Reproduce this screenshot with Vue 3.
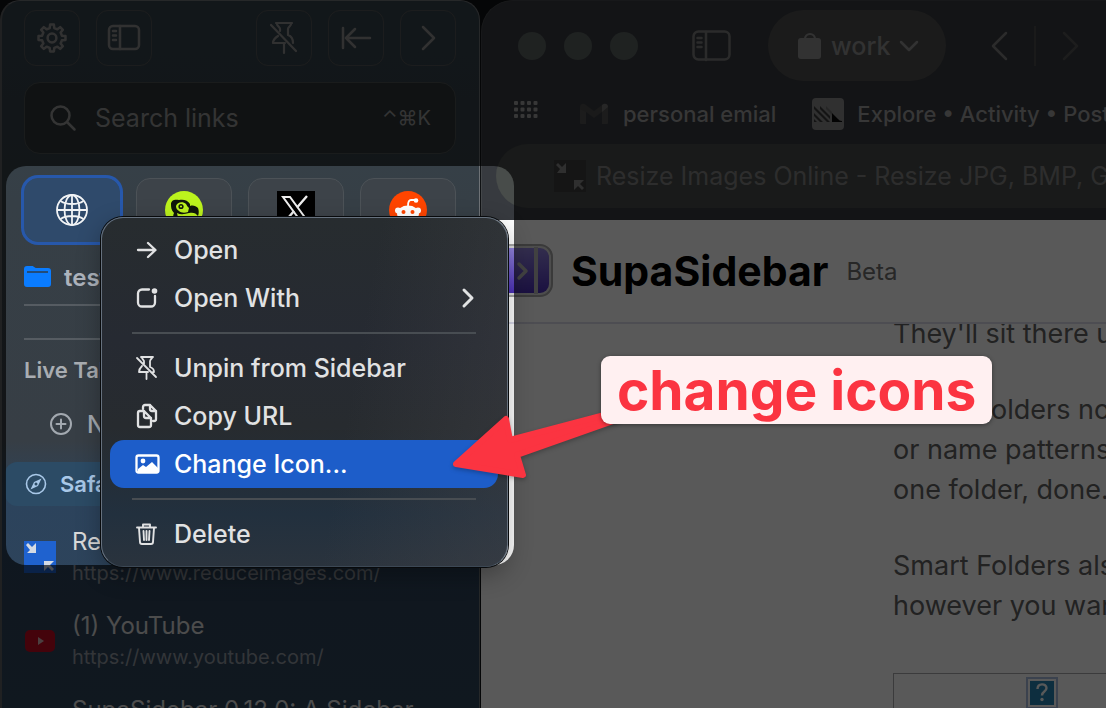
<script setup>
const gearPoints = Array.from({ length: 32 }, (_, i) => {
  const tooth = Math.floor(i / 4)
  const step = i % 4
  const base = tooth * 45 - 90
  const offset = [-13, -8, 8, 13][step]
  const radius = step === 1 || step === 2 ? 13.6 : 10.2
  const angle = ((base + offset) * Math.PI) / 180
  return `${(15 + radius * Math.cos(angle)).toFixed(2)},${(15 + radius * Math.sin(angle)).toFixed(2)}`
}).join(' ')

const tabs = [
  { icon: 'resize', title: 'Resize Images', url: 'https://www.reduceimages.com/' },
  { icon: 'youtube', title: '(1) YouTube', url: 'https://www.youtube.com/' },
  { icon: '', title: 'SupaSidebar 0.12.0: A Sidebar', url: '' },
]

const menuGroups = [
  [
    { id: 'open', label: 'Open' },
    { id: 'with', label: 'Open With', more: true },
  ],
  [
    { id: 'unpin', label: 'Unpin from Sidebar' },
    { id: 'copy', label: 'Copy URL' },
    { id: 'image', label: 'Change Icon...', active: true },
  ],
  [{ id: 'trash', label: 'Delete' }],
]
</script>

<template>
  <div class="desktop">
    <aside class="sidebar">
      <div class="tools">
        <button class="tool" aria-label="Settings">
          <svg width="30" height="30" viewBox="0 0 30 30" class="line">
            <polygon :points="gearPoints" />
            <circle cx="15" cy="15" r="4.4" />
          </svg>
        </button>
        <button class="tool" aria-label="Toggle sidebar">
          <svg width="34" height="28" viewBox="0 0 34 28" class="line">
            <rect x="2" y="2" width="30" height="23" rx="4" />
            <path d="M13 2v23M6 7h3M6 11.500h3M6 16h3" />
          </svg>
        </button>
        <span class="spacer"></span>
        <button class="tool" aria-label="Unpin window">
          <svg width="32" height="34" viewBox="0 0 32 34" class="line thin">
            <path d="M8 2h16M9 3c0 2 3 3 3 5v2M23 3c0 2-3 3-3 5v6c3 1 5 4 5 8M10 15c-3 2-5 4-5 7h12M16 22v10M3 4l25 26" />
          </svg>
        </button>
        <button class="tool" aria-label="Dock left">
          <svg width="32" height="24" viewBox="0 0 32 24" class="line">
            <path d="M3 2v20M30 12H6M15 3l-9 9 9 9" />
          </svg>
        </button>
        <button class="tool" aria-label="Next">
          <svg width="20" height="28" viewBox="0 0 20 28" class="line">
            <path d="M5 3l11 11L5 25" />
          </svg>
        </button>
      </div>

      <label class="search">
        <svg width="28" height="28" viewBox="0 0 28 28" class="line">
          <circle cx="11.500" cy="11.500" r="9" />
          <path d="M18.500 18.500l7 7" />
        </svg>
        <input type="text" placeholder="Search links" aria-label="Search links" />
        <kbd>⌃⌘K</kbd>
      </label>

      <div class="tiles">
        <button class="tile selected" aria-label="Website">
          <svg width="34" height="34" viewBox="0 0 34 34" class="globe">
            <circle cx="17" cy="17" r="15" />
            <ellipse cx="17" cy="17" rx="7.500" ry="15" />
            <path d="M17 2v30M2 17h30M5.500 8c6 4 17 4 23 0M5.500 26c6-4 17-4 23 0" />
          </svg>
        </button>
        <button class="tile" aria-label="Dodo">
          <svg width="38" height="38" viewBox="0 0 38 38">
            <circle cx="19" cy="19" r="19" fill="#bcf31d" />
            <path d="M6 13c0-4 4-5 8-4 4-1 9 0 11 4l0 2c3-1 6 0 8 2 1 3 1 5 0 8-2-3-5-4-9-3-4 1-8 2-12 0l2 9C9 30 7 26 9 22c-3-3-3-6-3-9z" fill="#10160b" />
            <path d="M11 15c1-4 7-5 10-2 1 2 2 3 3 4l-1 4c-3 1-7 1-9-1-2-1-3-3-3-5z" fill="#bcf31d" />
            <circle cx="16" cy="15.500" r="2.600" fill="#10160b" />
            <circle cx="16" cy="15.500" r="1.100" fill="#bcf31d" />
          </svg>
        </button>
        <button class="tile" aria-label="X">
          <svg width="38" height="38" viewBox="0 0 38 38">
            <rect width="38" height="38" fill="#000" />
            <path d="M6 6h7l19 26h-7z" fill="none" stroke="#eee" stroke-width="2" />
            <path d="M30 5L20 16.500M17 20L6 33" stroke="#eee" stroke-width="2.400" />
          </svg>
        </button>
        <button class="tile" aria-label="Reddit">
          <svg width="38" height="38" viewBox="0 0 38 38">
            <circle cx="19" cy="19" r="19" fill="#ff4500" />
            <path d="M19 15c0-4 1-6 3-6h4" fill="none" stroke="#fff" stroke-width="1.800" />
            <circle cx="27" cy="9.500" r="2.300" fill="#fff" />
            <circle cx="9" cy="19.500" r="3" fill="#fff" />
            <circle cx="29" cy="19.500" r="3" fill="#fff" />
            <ellipse cx="19" cy="23" rx="11" ry="8.500" fill="#fff" />
            <circle cx="14.500" cy="21" r="2" fill="#ff4500" />
            <circle cx="23.500" cy="21" r="2" fill="#ff4500" />
            <path d="M14 26c3 3 7 3 10 0" fill="none" stroke="#333" stroke-width="1.500" />
          </svg>
        </button>
      </div>

      <div class="folder">
        <svg width="28" height="24" viewBox="0 0 28 24">
          <path d="M0 4a3 3 0 0 1 3-3h5c2 0 2 2 5 2h11a3 3 0 0 1 3 3v13a3 3 0 0 1-3 3H3a3 3 0 0 1-3-3z" fill="#0a7cff" />
          <path d="M3 7h21" stroke="#2c3c4c" stroke-width="1.500" />
        </svg>
        <span>test</span>
      </div>
      <hr class="rule" />
      <hr class="rule second" />
      <h2 class="live">Live Tabs</h2>
      <button class="newtab">
        <svg width="24" height="24" viewBox="0 0 24 24" class="line small">
          <circle cx="12" cy="12" r="10" />
          <path d="M12 7.500v9M7.500 12h9" />
        </svg>
        New Tab
      </button>
      <div class="safari">
        <svg width="22" height="22" viewBox="0 0 22 22">
          <circle cx="11" cy="11" r="9.500" fill="none" stroke="currentColor" stroke-width="1.600" />
          <path d="M16.500 5.500l-3.500 7.500-7.500 3.500 3.500-7.500z" fill="currentColor" />
          <circle cx="11" cy="11" r="1.500" fill="#2c4b65" />
        </svg>
        Safari
      </div>
      <a v-for="tab in tabs" :key="tab.title" class="tab" href="#">
        <span class="favicon">
          <svg v-if="tab.icon === 'resize'" width="32" height="32" viewBox="0 0 32 32">
            <rect width="32" height="32" fill="#1f62cf" />
            <path d="M2 4l2-2 4 4 4-4v10H3l3-3zM20 20h10l-4 4 4 4-2 2-4-4-4 4z" fill="#d5dbe4" />
          </svg>
          <svg v-else-if="tab.icon === 'youtube'" width="32" height="24" viewBox="0 0 32 24">
            <rect x="1" y="1" width="30" height="22" rx="5" fill="#c20b21" />
            <path d="M14 8l6 4-6 4z" fill="#d8b4b8" />
          </svg>
        </span>
        <span class="lines">
          <span class="title">{{ tab.title }}</span>
          <span class="url">{{ tab.url }}</span>
        </span>
      </a>
    </aside>

    <main class="browser">
      <header class="chrome">
        <div class="bar">
          <span class="lights"><i></i><i></i><i></i></span>
          <button class="plain" aria-label="Show sidebar">
            <svg width="40" height="32" viewBox="0 0 40 32" class="line">
              <rect x="1.500" y="1.500" width="36" height="28" rx="5" />
              <path d="M14 2v28M5.500 8h4M5.500 12.500h4M5.500 17h4" />
            </svg>
          </button>
          <button class="profile">
            <svg width="24" height="28" viewBox="0 0 24 28">
              <rect x="0" y="6" width="23" height="21" rx="3" fill="currentColor" />
              <path d="M7 7a5 5 0 0 1 10 0" fill="none" stroke="currentColor" stroke-width="2.200" />
            </svg>
            <span>work</span>
            <svg width="20" height="14" viewBox="0 0 20 14" class="line">
              <path d="M2 3l8 8 8-8" />
            </svg>
          </button>
          <button class="plain nav" aria-label="Back">
            <svg width="18" height="30" viewBox="0 0 18 30" class="line"><path d="M16 2L3 15l13 13" /></svg>
          </button>
          <span class="divider"></span>
          <button class="plain nav faint" aria-label="Forward">
            <svg width="18" height="30" viewBox="0 0 18 30" class="line"><path d="M2 2l13 13L2 28" /></svg>
          </button>
        </div>

        <nav class="bookmarks">
          <svg class="grid" width="24" height="18" viewBox="0 0 24 18" fill="currentColor">
            <g v-for="row in 3" :key="row">
              <rect v-for="col in 4" :key="col" :x="col * 6.5 - 6.5" :y="row * 6.5 - 6.5" width="4" height="4" rx="1" />
            </g>
          </svg>
          <a class="mail" href="#">
            <svg width="28" height="22" viewBox="0 0 28 22">
              <path d="M0 3v17a1 1 0 0 0 1 1h5V8z" fill="#505050" />
              <path d="M28 3v17a1 1 0 0 1-1 1h-5V8z" fill="#505050" />
              <path d="M0 4c0-4 4-4 6-2l8 6 8-6v7l-8 6-8-6-6-3z" fill="#4a4a4a" />
              <path d="M22 2c2-2 6-2 6 2l-6 5z" fill="#707070" />
            </svg>
            personal emial
          </a>
          <a class="explore" href="#">
            <svg width="32" height="32" viewBox="0 0 32 32">
              <rect width="32" height="32" rx="4" fill="#8a8a8a" />
              <path d="M2 8v3l13 13h3zM2 15v3l6 6h3zM2 21v3h3zM8 8v3l10 10v-3z" fill="#3a3a3a" />
              <path d="M14 8v3l6 6v-3z" fill="#6e6e6e" />
              <path d="M20 15v9h10v-1c-2 0-3-1-4-2z" fill="#0b0b0b" />
            </svg>
            Explore • Activity • Posthog
          </a>
        </nav>

        <button class="address">
          <svg width="32" height="32" viewBox="0 0 32 32">
            <rect width="32" height="32" fill="#3c3c3c" />
            <path d="M2 5l2-2 4 4 4-4v10H3l3-4zM20 20h10l-4 4 4 4-2 2-4-4-4 4z" fill="#888" />
          </svg>
          <span>Resize Images Online - Resize JPG, BMP, GIF</span>
        </button>
      </header>

      <section class="page">
        <header class="site">
          <svg width="100" height="54" viewBox="0 0 100 54">
            <rect x="1" y="1" width="97" height="51" rx="12" fill="#ddd" stroke="#a5a5a5" stroke-width="2" />
            <rect x="4" y="4" width="91" height="45" rx="9" fill="url(#violet)" />
            <rect x="80" y="3" width="4" height="47" fill="#bbb" />
            <path d="M65 20l7 7-7 7" fill="none" stroke="#b9b9b9" stroke-width="3.500" stroke-linecap="round" stroke-linejoin="round" />
            <defs>
              <linearGradient id="violet" x1="0" y1="0" x2="0" y2="1">
                <stop offset="0" stop-color="#9183dd" />
                <stop offset="1" stop-color="#4c30b8" />
              </linearGradient>
            </defs>
          </svg>
          <h1>SupaSidebar</h1>
          <span class="beta">Beta</span>
        </header>
        <article class="article">
          <p>They'll sit there until</p>
          <p>Smart Folders now<br />or name patterns,<br />one folder, done.</p>
          <p>Smart Folders also<br />however you want.</p>
          <div class="figure">
            <svg width="32" height="32" viewBox="0 0 32 32">
              <rect width="32" height="32" fill="#a9bcdf" />
              <rect x="2" y="2" width="28" height="28" fill="#fff" />
              <rect x="4" y="4" width="24" height="24" fill="#2585b5" />
              <path d="M11.500 12c0-6 9-6 9-1 0 4-4.500 3-4.500 7.500" fill="none" stroke="#fff" stroke-width="2.400" />
              <circle cx="16" cy="22.500" r="1.700" fill="#fff" />
            </svg>
          </div>
        </article>
      </section>
    </main>

    <div class="spotlight"></div>

    <div class="menu" role="menu">
      <div v-for="(group, g) in menuGroups" :key="g" class="group">
        <button v-for="item in group" :key="item.id" role="menuitem" class="item" :class="{ active: item.active }">
          <svg width="28" height="28" viewBox="0 0 28 28" class="line menuicon">
            <path v-if="item.id === 'open'" d="M5 14h17M15 7l7.500 7-7.500 7" />
            <g v-else-if="item.id === 'with'">
              <path d="M16 5.500H9a4 4 0 0 0-4 4v9a4 4 0 0 0 4 4h9a4 4 0 0 0 4-4V12" />
              <circle cx="21.500" cy="7" r="2.800" fill="currentColor" stroke="none" />
            </g>
            <path v-else-if="item.id === 'unpin'" stroke-width="1.800" d="M8 3h12M9 4l2 3M19 4c-1 1-2 2-2 3v6c3 1 4 3 4 5h-1M9 12c-2 2-3 3-3 6h9M13.500 18v7M4 4l19 19M11 7v3" />
            <g v-else-if="item.id === 'copy'">
              <path d="M5 11a2 2 0 0 1 2-2h4l7 7v7a2 2 0 0 1-2 2H7a2 2 0 0 1-2-2zM11 9v5a2 2 0 0 0 2 2h5" />
              <path d="M10 7V5a2 2 0 0 1 2-2h5l6 6v8a2 2 0 0 1-2 2h-1M17 3v4a2 2 0 0 0 2 2h4" />
            </g>
            <g v-else-if="item.id === 'image'">
              <rect x="3.500" y="5.500" width="22" height="17" rx="2" />
              <circle cx="10" cy="11" r="2.400" fill="currentColor" stroke="none" />
              <path d="M5 19l5-4 3 2 6-5 6 6v4H5z" fill="currentColor" stroke="none" />
            </g>
            <path v-else d="M4 7.500h19M10 7V4.500h7V7M6 8l1 14a2 2 0 0 0 2 2h9a2 2 0 0 0 2-2l1-14M10.500 11l.5 9M13.500 11v9M16.500 11l-.5 9" stroke-width="1.900" />
          </svg>
          <span>{{ item.label }}</span>
          <svg v-if="item.more" width="14" height="22" viewBox="0 0 14 22" class="line more">
            <path d="M3 3l8 8-8 8" />
          </svg>
        </button>
      </div>
    </div>

    <svg class="arrow" width="180" height="90" viewBox="0 0 180 90">
      <path d="M6 58L56 13l4 21L166 6v8L67 49l6 20z" fill="#fb3441" stroke="#fb3441" stroke-width="6" stroke-linejoin="round" />
    </svg>
    <div class="callout">change icons</div>
  </div>
</template>

<style>
body {
  background: #101214;
}
</style>

<style scoped>
.desktop {
  position: relative;
  display: flex;
  height: 100vh;
  overflow: hidden;
  background: #101214;
  font-family: Inter, "Liberation Sans", sans-serif;
}
* {
  box-sizing: border-box;
}
button,
input {
  font: inherit;
  color: inherit;
  background: none;
  border: 0;
  padding: 0;
  margin: 0;
}
a {
  color: inherit;
  text-decoration: none;
}
svg {
  display: block;
  flex: none;
}
.line {
  fill: none;
  stroke: currentColor;
  stroke-width: 2.5;
  stroke-linecap: round;
  stroke-linejoin: round;
}
.thin {
  stroke-width: 2.2;
}
.small {
  stroke-width: 2;
}
.sidebar {
  flex: 0 0 480px;
  height: 100%;
  overflow: hidden;
  padding: 9px 23px 0 22px;
  border: 1px solid #6e7276;
  border-left: 2px solid #5d6063;
  border-bottom: 0;
  border-radius: 20px 20px 0 0;
  background: linear-gradient(#36434c 0, #363f46 200px, #373e45 440px, #2c435c 500px, #30455a 100%);
}
.tools {
  display: flex;
  gap: 16px;
  color: #8e8e8e;
}
.tool {
  display: grid;
  place-items: center;
  width: 56px;
  height: 56px;
  border: 1px solid #525556;
  border-radius: 12px;
}
.spacer {
  flex: 1;
}
.search {
  display: flex;
  align-items: center;
  height: 72px;
  margin-top: 16px;
  padding: 0 24px;
  border: 1px solid #4c5051;
  border-radius: 16px;
  background: #2e3638;
  color: #959595;
}
.search input {
  flex: 1;
  min-width: 0;
  margin-left: 18px;
  outline: 0;
  font-size: 25px;
}
.search input::placeholder {
  color: #959595;
  opacity: 1;
}
kbd {
  font: 20px Inter, "DejaVu Sans", sans-serif;
}
.tiles {
  display: flex;
  gap: 16px;
  margin-top: 24px;
}
.tile {
  display: grid;
  place-items: center;
  flex: 1;
  height: 64px;
  border: 1px solid #4c5257;
  border-radius: 14px;
  background: #3d4349;
}
.selected {
  border-color: #2f4a6b;
  background: #2f4a6b;
  box-shadow: 0 0 0 3px #2758ab;
}
.globe {
  fill: none;
  stroke: #f1f3f5;
  stroke-width: 1.8;
}
.folder {
  display: flex;
  align-items: center;
  gap: 12px;
  height: 44px;
  margin-top: 13px;
  font-size: 24px;
  font-weight: 600;
  color: #adb3bc;
}
.rule {
  height: 2px;
  margin: 5px 0 0;
  border: 0;
  background: #565c62;
}
.second {
  margin-top: 32px;
}
.live {
  margin: 16px 0 0;
  font-size: 22px;
  line-height: 28px;
  font-weight: 600;
  color: #a9adb2;
}
.newtab {
  display: flex;
  align-items: center;
  gap: 14px;
  height: 40px;
  margin: 20px 0 0 25px;
  font-size: 24px;
  font-weight: 500;
  color: #a3a9b0;
}
.safari {
  display: flex;
  align-items: center;
  gap: 13px;
  height: 44px;
  margin: 18px -19px 9px;
  padding-left: 20px;
  border-radius: 12px;
  background: #2c4b65;
  font-size: 22px;
  font-weight: 600;
  color: #a9c8e8;
}
.tab {
  display: flex;
  align-items: center;
  gap: 16px;
  height: 84px;
}
.favicon {
  width: 32px;
}
.lines {
  display: flex;
  flex-direction: column;
  white-space: nowrap;
}
.title {
  font-size: 24px;
  line-height: 32px;
  color: #d9d9d9;
}
.url {
  height: 30px;
  font-size: 20px;
  line-height: 30px;
  color: #9299a2;
}
.browser {
  flex: 1;
  min-width: 0;
  display: flex;
  flex-direction: column;
  margin-left: 1px;
  border-radius: 32px 0 0 0;
  overflow: hidden;
  background: #373a3f;
}
.chrome {
  height: 220px;
  overflow: hidden;
  padding: 9px 0 0 14px;
  border-top: 1px solid #44474a;
  border-left: 1px solid #44474a;
  border-radius: 32px 0 0 0;
}
.bar {
  display: flex;
  align-items: center;
  height: 71px;
  padding-left: 22px;
  color: #7d7d7d;
}
.lights {
  display: flex;
  gap: 18px;
}
.lights i {
  width: 28px;
  height: 28px;
  border-radius: 50%;
  background: #5a6260;
}
.plain {
  margin-left: 54px;
}
.profile {
  display: flex;
  align-items: center;
  gap: 9px;
  height: 71px;
  margin-left: 36px;
  padding: 0 27px 0 30px;
  border-radius: 36px;
  background: #4e4e4e;
  color: #919191;
  font-size: 25px;
  font-weight: 500;
}
.nav {
  margin-left: 44px;
}
.divider {
  width: 2px;
  height: 40px;
  margin-left: 26px;
  background: #4c4c4c;
}
.faint {
  margin-left: 26px;
  color: #555;
}
.bookmarks {
  display: flex;
  align-items: center;
  height: 44px;
  margin-top: 11px;
  padding-left: 18px;
  font-size: 22px;
  font-weight: 500;
  color: #9d9d9d;
  white-space: nowrap;
}
.grid {
  margin-bottom: 8px;
}
.mail {
  display: flex;
  align-items: center;
  gap: 15px;
  margin-left: 42px;
}
.explore {
  display: flex;
  align-items: center;
  gap: 13px;
  margin-left: 36px;
}
.address {
  display: flex;
  align-items: center;
  gap: 10px;
  width: 100%;
  height: 64px;
  margin-top: 8px;
  padding-left: 58px;
  border-radius: 32px 0 0 32px;
  background: #484c4a;
  color: #828282;
  font-size: 25px;
  white-space: nowrap;
}
.page {
  flex: 1;
  min-height: 0;
  overflow: hidden;
  background: #fff;
}
.site {
  display: flex;
  align-items: center;
  height: 104px;
  margin-left: -27px;
  border-bottom: 2px solid #dcdcec;
}
h1 {
  margin: 0 0 0 17px;
  font-size: 41px;
  line-height: 50px;
  font-weight: 700;
  color: #000;
}
.beta {
  margin-left: 18px;
  font-size: 24px;
  color: #6f6f6f;
}
.article {
  margin: -10px 0 0 412px;
  clip-path: inset(10px 0 0 0);
  font-size: 27px;
  line-height: 40px;
  color: #616161;
  white-space: nowrap;
}
.article p {
  margin: 0 0 36px;
}
.article .figure {
  display: flex;
  height: 80px;
  margin-top: 47px;
  padding: 3px 0 0 132px;
  border: solid #a9a9ad;
  border-width: 1px 0 0 1px;
}
.spotlight {
  position: absolute;
  left: 6px;
  top: 166px;
  width: 508px;
  height: 399px;
  border-radius: 20px;
  box-shadow: 0 0 0 2000px rgba(0, 0, 0, 0.65);
  pointer-events: none;
}
.menu {
  position: absolute;
  left: 101px;
  top: 217px;
  width: 407px;
  padding: 8px 9px 8px 8px;
  border: 1px solid #66717e;
  border-bottom-color: #3c4855;
  border-radius: 22px;
  background: linear-gradient(100deg, rgba(60, 66, 72, 0) 60%, rgba(70, 70, 74, 0.4)), linear-gradient(#272c2f 0, #262a32 35%, #272b2f 60%, #22303e 85%, #2a333d 100%);
  box-shadow: 0 0 0 1px #080a0c, 0 8px 24px rgba(0, 0, 0, 0.3);
}
.group + .group::before {
  content: "";
  display: block;
  height: 2px;
  margin: 10px 22px;
  background: #484d52;
}
.item {
  display: flex;
  align-items: center;
  gap: 13px;
  width: 100%;
  height: 48px;
  padding: 0 23px;
  border-radius: 14px;
  color: #e1e2e3;
  font-size: 25px;
  font-weight: 500;
  text-align: left;
}
.active {
  background: #1d5dc9;
  color: #fff;
}
.menuicon {
  stroke-width: 2.3;
}
.more {
  margin-left: auto;
  stroke-width: 3;
}
.arrow {
  position: absolute;
  left: 450px;
  top: 406px;
  filter: drop-shadow(0 2px 2px rgba(0, 0, 0, 0.25));
}
.callout {
  position: absolute;
  left: 601px;
  top: 356px;
  padding: 0 16px;
  border-radius: 9px;
  background: #fff0f1;
  box-shadow: 0 1px 4px rgba(0, 0, 0, 0.4);
  color: #fb3441;
  font-size: 55px;
  line-height: 68px;
  font-weight: 700;
  white-space: nowrap;
}
</style>
